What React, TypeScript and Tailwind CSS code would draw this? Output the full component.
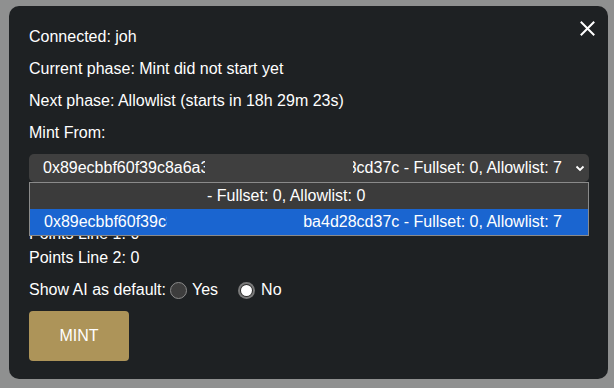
import React from "react";

const ADDRESS = "0x89ecbbf60f39c8a6a3e41d7f02b9c55ba4d28cd37c";

// one line of the address list; the middle of the address is masked out
const MaskedRow = ({
  leftWidth,
  rightWidth,
  left,
  right,
}: {
  leftWidth: number;
  rightWidth: number;
  left: string;
  right: string;
}) => (
  <div className="flex items-center justify-between w-full">
    <span
      className="block overflow-hidden whitespace-nowrap"
      style={{ width: leftWidth }}
    >
      {left}
    </span>
    <span
      className="flex justify-end overflow-hidden whitespace-nowrap"
      style={{ width: rightWidth }}
    >
      <span className="shrink-0">{right}</span>
    </span>
  </div>
);

const Radio = ({ checked }: { checked: boolean }) =>
  checked ? (
    <span className="flex w-[17px] h-[17px] rounded-full bg-[#7a7a7a] p-[2px]">
      <span className="flex w-full h-full rounded-full bg-[#2c2c2c] p-[1px]">
        <span className="block w-full h-full rounded-full bg-white" />
      </span>
    </span>
  ) : (
    <span className="block w-[17px] h-[17px] rounded-full border border-[#8a8a8a] bg-[#3d3d3d]" />
  );

export default function App() {
  const line = "h-[18px] leading-[18px]";

  return (
    <div
      className="w-[614px] h-[388px] bg-[#8f9090] pt-[6px] pl-[9px] text-white text-[16px]"
      style={{ fontFamily: '"Liberation Sans", Arial, sans-serif' }}
    >
      <div className="relative w-[599px] h-[373px] rounded-[10px] bg-[#1e2123] pt-[22px] px-[20px] flex flex-col">
        <button className="absolute top-[14px] right-[13px] w-[16px] h-[16px] flex items-center justify-center">
          <svg width="15" height="15" viewBox="0 0 15 15">
            <path
              d="M1.5 1.5 L13.5 13.5 M13.5 1.5 L1.5 13.5"
              stroke="white"
              strokeWidth="2"
              strokeLinecap="square"
            />
          </svg>
        </button>

        <div className={line}>Connected: joh</div>
        <div className={`${line} mt-[14px]`}>
          Current phase: Mint did not start yet
        </div>
        <div className={`${line} mt-[14px]`}>
          Next phase: Allowlist (starts in 18h 29m 23s)
        </div>
        <div className={`${line} mt-[14px]`}>Mint From:</div>

        <div className="relative mt-[12px] w-[560px]">
          <div className="h-[28px] rounded-[5px] bg-[#3f3f3f] pl-[14px] pr-[4px] flex items-center">
            <div className="flex-1 pr-[13px]">
              <MaskedRow
                leftWidth={162}
                rightWidth={209}
                left={ADDRESS}
                right={ADDRESS + " - Fullset: 0, Allowlist: 7"}
              />
            </div>
            <svg width="10" height="7" viewBox="0 0 10 7">
              <path
                d="M1.5 1.5 L5 5 L8.5 1.5"
                stroke="white"
                strokeWidth="1.8"
                fill="none"
              />
            </svg>
          </div>

          <div className="absolute left-0 top-[28px] w-[560px] border border-[#8a8a8a] bg-[#3b3b3b] z-10">
            <div className="h-[26px] flex items-center pl-[177px]">
              - Fullset: 0, Allowlist: 0
            </div>
            <div className="h-[26px] flex items-center bg-[#1a65d0] pl-[14px] pr-[26px]">
              <MaskedRow
                leftWidth={123}
                rightWidth={259}
                left={ADDRESS}
                right={ADDRESS + " - Fullset: 0, Allowlist: 7"}
              />
            </div>
          </div>
        </div>

        <div className={`${line} mt-[43px]`}>Points Line 1: 0</div>
        <div className={`${line} mt-[6px]`}>Points Line 2: 0</div>

        <div className={`${line} mt-[14px] flex items-center`}>
          <span>Show AI as default:</span>
          <span className="ml-[4px]">
            <Radio checked={false} />
          </span>
          <span className="ml-[5px]">Yes</span>
          <span className="ml-[20px]">
            <Radio checked />
          </span>
          <span className="ml-[6px]">No</span>
        </div>

        <button className="mt-[12px] w-[100px] h-[50px] rounded-[4px] bg-[#ad9459] text-white text-[16px]">
          MINT
        </button>
      </div>
    </div>
  );
}
